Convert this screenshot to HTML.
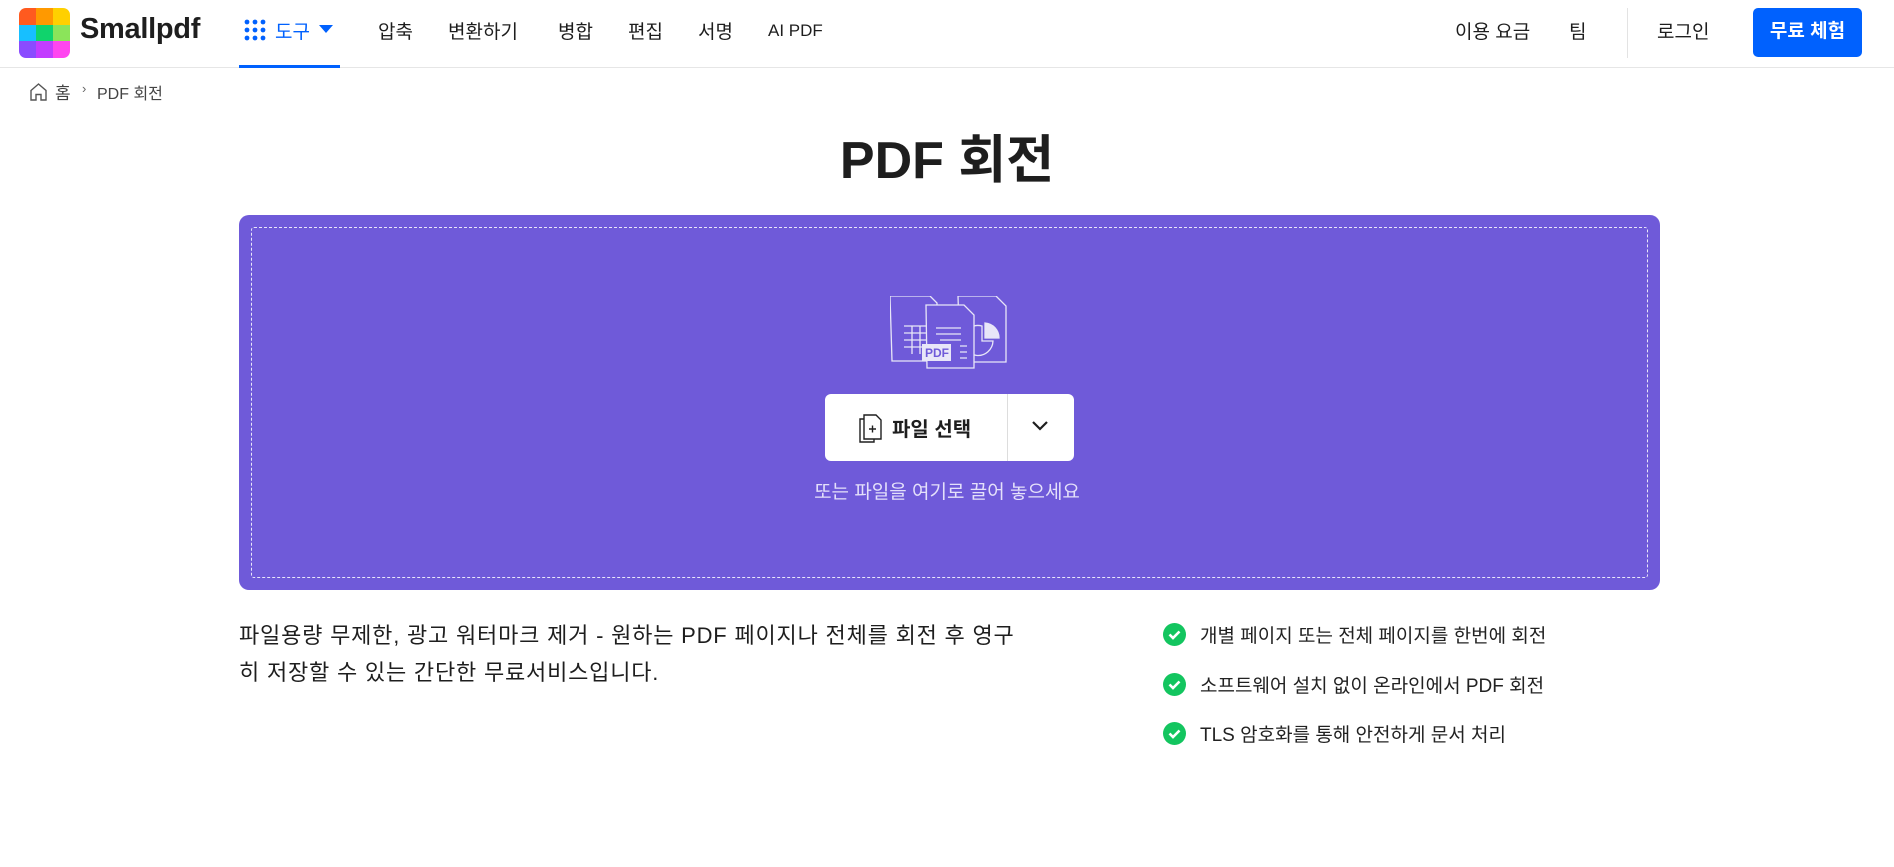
<!DOCTYPE html>
<html><head><meta charset="utf-8"><style>
*{margin:0;padding:0;box-sizing:border-box}
body{width:1894px;height:867px;background:#fff;font-family:"Liberation Sans","Noto Sans CJK KR",sans-serif;color:#1e1e1e;position:relative;overflow:hidden}
.a{position:absolute;white-space:nowrap}
.nav{position:absolute;left:0;top:0;width:1894px;height:68px;border-bottom:1px solid #e6e6e6}
.m{font-size:19px;top:17px;color:#1e1e1e}
.chk{position:absolute;width:23px;height:23px;border-radius:50%;background:#13c55f}
.li{font-size:19px;color:#222}
</style></head><body>
<div class="nav"></div>
<svg class="a" style="left:19px;top:8px" width="51" height="50" viewBox="0 0 51 50">
<defs><clipPath id="c"><rect width="51" height="50" rx="7"/></clipPath></defs>
<g clip-path="url(#c)">
<rect x="0" y="0" width="17" height="17" fill="#ff5a1f"/><rect x="17" y="0" width="17" height="17" fill="#ff9900"/><rect x="34" y="0" width="17" height="17" fill="#ffd000"/>
<rect x="0" y="17" width="17" height="16" fill="#17bfff"/><rect x="17" y="17" width="17" height="16" fill="#10d36c"/><rect x="34" y="17" width="17" height="16" fill="#8be45a"/>
<rect x="0" y="33" width="17" height="17" fill="#8a4cff"/><rect x="17" y="33" width="17" height="17" fill="#c23cff"/><rect x="34" y="33" width="17" height="17" fill="#ff45f0"/>
</g></svg>
<div class="a" style="left:80px;top:13px;font-size:29px;font-weight:bold;letter-spacing:-0.3px">Smallpdf</div>
<svg class="a" style="left:244px;top:19px" width="22" height="22" viewBox="0 0 22 22" fill="#0061fe">
<circle cx="3" cy="3" r="2.4"/><circle cx="11" cy="3" r="2.4"/><circle cx="19" cy="3" r="2.4"/><circle cx="3" cy="11" r="2.4"/><circle cx="11" cy="11" r="2.4"/><circle cx="19" cy="11" r="2.4"/><circle cx="3" cy="19" r="2.4"/><circle cx="11" cy="19" r="2.4"/><circle cx="19" cy="19" r="2.4"/></svg>
<div class="a m" style="left:275px;color:#0061fe">도구</div>
<svg class="a" style="left:319px;top:25px" width="14" height="9"><path d="M0 0H14L7 8Z" fill="#0061fe"/></svg>
<div class="a" style="left:239px;top:65px;width:101px;height:3px;background:#0061fe"></div>
<div class="a m" style="left:378px">압축</div>
<div class="a m" style="left:448px">변환하기</div>
<div class="a m" style="left:558px">병합</div>
<div class="a m" style="left:628px">편집</div>
<div class="a m" style="left:698px">서명</div>
<div class="a m" style="left:768px;font-size:17px;top:21px">AI PDF</div>
<div class="a m" style="left:1455px">이용 요금</div>
<div class="a m" style="left:1569px">팀</div>
<div class="a" style="left:1627px;top:8px;width:1px;height:50px;background:#e3e3e3"></div>
<div class="a m" style="left:1657px">로그인</div>
<div class="a" style="left:1753px;top:8px;width:109px;height:49px;background:#0061fe;border-radius:5px;color:#fff;font-weight:bold;font-size:19px;text-align:center;line-height:47px">무료 체험</div>
<svg class="a" style="left:29px;top:82px" width="19" height="19" viewBox="0 0 19 19" fill="none" stroke="#555" stroke-width="1.4"><path d="M2 8.5L9.5 2L17 8.5V18H12V12.5H7V18H2Z"/></svg>
<div class="a" style="left:55px;top:79px;font-size:17px;color:#444">홈</div>
<div class="a" style="left:82px;top:81px;font-size:13px;color:#666">›</div>
<div class="a" style="left:97px;top:80px;font-size:16px;color:#444">PDF 회전</div>
<div class="a" style="left:0;width:1894px;text-align:center;top:118px;font-size:52px;font-weight:bold;color:#1e1e1e">PDF 회전</div>
<div class="a" style="left:239px;top:215px;width:1421px;height:375px;background:#6f5ad9;border-radius:10px"></div>
<div class="a" style="left:251px;top:227px;width:1397px;height:351px;border:1px dashed rgba(255,255,255,.85);border-radius:3px"></div>
<svg class="a" style="left:890px;top:296px" width="120" height="74" viewBox="0 0 120 74" fill="#6f5ad9" stroke="#e8e6f8" stroke-width="1.3">
<path d="M0 0H40L47 7V65H2Z"/>
<path d="M68 0H106L116 10V66H70Z"/>
<path d="M14 30H36M14 37H36M14 44H36M14 51H36M22 30V58M30 30V58"/>
<path d="M92 30A15 15 0 1 0 103 45H92Z"/><path d="M95 27V42H109A15 15 0 0 0 95 27Z" fill="#e8e6f8"/>
<path d="M36 9H74L84 19V72H37Z"/>
<path d="M46 32H71M46 38H71M50 44H71M70 50H77M70 56H77M70 62H77"/>
<rect x="32" y="48" width="29" height="17" fill="#e8e6f8" stroke="none"/>
<text x="35" y="61" font-family="Liberation Sans" font-size="12" font-weight="bold" fill="#6f5ad9" stroke="none">PDF</text>
</svg>
<div class="a" style="left:825px;top:394px;width:249px;height:67px;background:#fff;border-radius:6px"></div>
<div class="a" style="left:1007px;top:394px;width:1px;height:67px;background:#ddd"></div>
<svg class="a" style="left:859px;top:413px" width="24" height="30" viewBox="0 0 24 30" fill="#fff" stroke="#1e1e1e" stroke-width="1.4"><path d="M1 6H15V29H1Z"/><path d="M5 2H17L22 7V26H5Z"/><path d="M10 16H17M13.5 12.5V19.5"/></svg>
<div class="a" style="left:892px;top:413px;font-size:20px;font-weight:bold">파일 선택</div>
<svg class="a" style="left:1031px;top:420px" width="18" height="12"><path d="M2 2L9 9L16 2" fill="none" stroke="#1e1e1e" stroke-width="2.2"/></svg>
<div class="a" style="left:0;width:1894px;text-align:center;top:477px;font-size:19px;color:#e4e0fa">또는 파일을 여기로 끌어 놓으세요</div>
<div class="a" style="left:239px;top:617px;font-size:22px;line-height:37px;letter-spacing:0.8px;color:#1e1e1e">파일용량 무제한, 광고 워터마크 제거 - 원하는 PDF 페이지나 전체를 회전 후 영구<br>히 저장할 수 있는 간단한 무료서비스입니다.</div>
<div class="chk" style="left:1163px;top:623px"></div>
<div class="chk" style="left:1163px;top:673px"></div>
<div class="chk" style="left:1163px;top:722px"></div>
<svg class="a" style="left:1163px;top:623px" width="23" height="123"><g fill="none" stroke="#fff" stroke-width="2.6"><path d="M6.5 11.5L10 15L16.5 8.5"/><path d="M6.5 61.5L10 65L16.5 58.5"/><path d="M6.5 110.5L10 114L16.5 107.5"/></g></svg>
<div class="a li" style="left:1200px;top:621px">개별 페이지 또는 전체 페이지를 한번에 회전</div>
<div class="a li" style="left:1200px;top:671px">소프트웨어 설치 없이 온라인에서 PDF 회전</div>
<div class="a li" style="left:1200px;top:720px">TLS 암호화를 통해 안전하게 문서 처리</div>
</body></html>
